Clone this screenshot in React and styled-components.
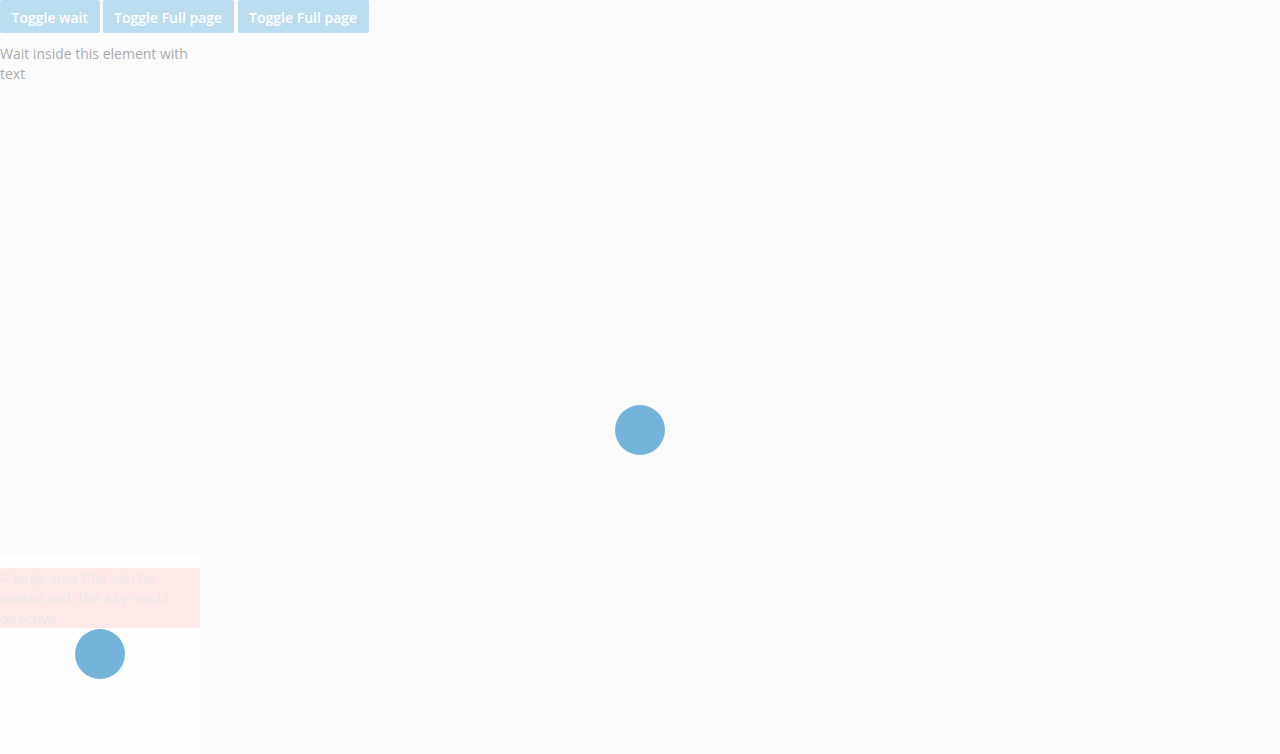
import React from "react";
import styled, { createGlobalStyle } from "styled-components";

const Global = createGlobalStyle`
  html, body { margin: 0; padding: 0; background: #fbfbfb; }
  body { font-family: "Open Sans", "Liberation Sans", sans-serif; font-size: 14px; line-height: 20px; color: #a9a9ae; }
`;

const Toolbar = styled.div`
  display: flex;
  gap: 3px;
`;

const Button = styled.button`
  height: 33px;
  padding: 2px 11.5px 0;
  border: none;
  border-radius: 2px;
  background: #bcdcef;
  color: #ffffff;
  font-family: "Open Sans", "Liberation Sans", sans-serif;
  font-weight: 600;
  font-size: 14px;
  line-height: 20px;
  cursor: pointer;
  margin-left: ${(p) => (p.$wide ? "1px" : "0")};
`;

const ElementWait = styled.div`
  width: 200px;
  margin-top: 11px;
  height: 510px;
`;

const LargeArea = styled.div`
  position: relative;
  width: 200px;
  height: 200px;
  background: #fefefe;
  padding-top: 14px;
  box-sizing: border-box;
`;

const Pink = styled.div`
  background: #ffe9e9;
  color: #ebe9e9;
  height: 60px;
`;

const Code = styled.code`
  font-family: "Liberation Mono", "DejaVu Sans Mono", monospace;
  font-size: 14px;
  line-height: 20px;
`;

const Spinner = styled.div`
  position: absolute;
  width: 50px;
  height: 50px;
  border-radius: 50%;
  background: #75b4da;
  left: ${(p) => p.$x}px;
  top: ${(p) => p.$y}px;
`;

const Page = styled.div`
  position: relative;
  height: 754px;
  overflow: hidden;
`;

export default function App() {
  return (
    <>
      <Global />
      <Page>
        <Toolbar>
          <Button>Toggle wait</Button>
          <Button>Toggle Full page</Button>
          <Button $wide>Toggle Full page</Button>
        </Toolbar>
        <ElementWait>Wait inside this element with text</ElementWait>
        <LargeArea>
          <Pink>
            A large area that can be waited with the <Code>sky-wait</Code> directive.
          </Pink>
          <Spinner $x={75} $y={75} />
        </LargeArea>
        <Spinner $x={615} $y={405} />
      </Page>
    </>
  );
}
